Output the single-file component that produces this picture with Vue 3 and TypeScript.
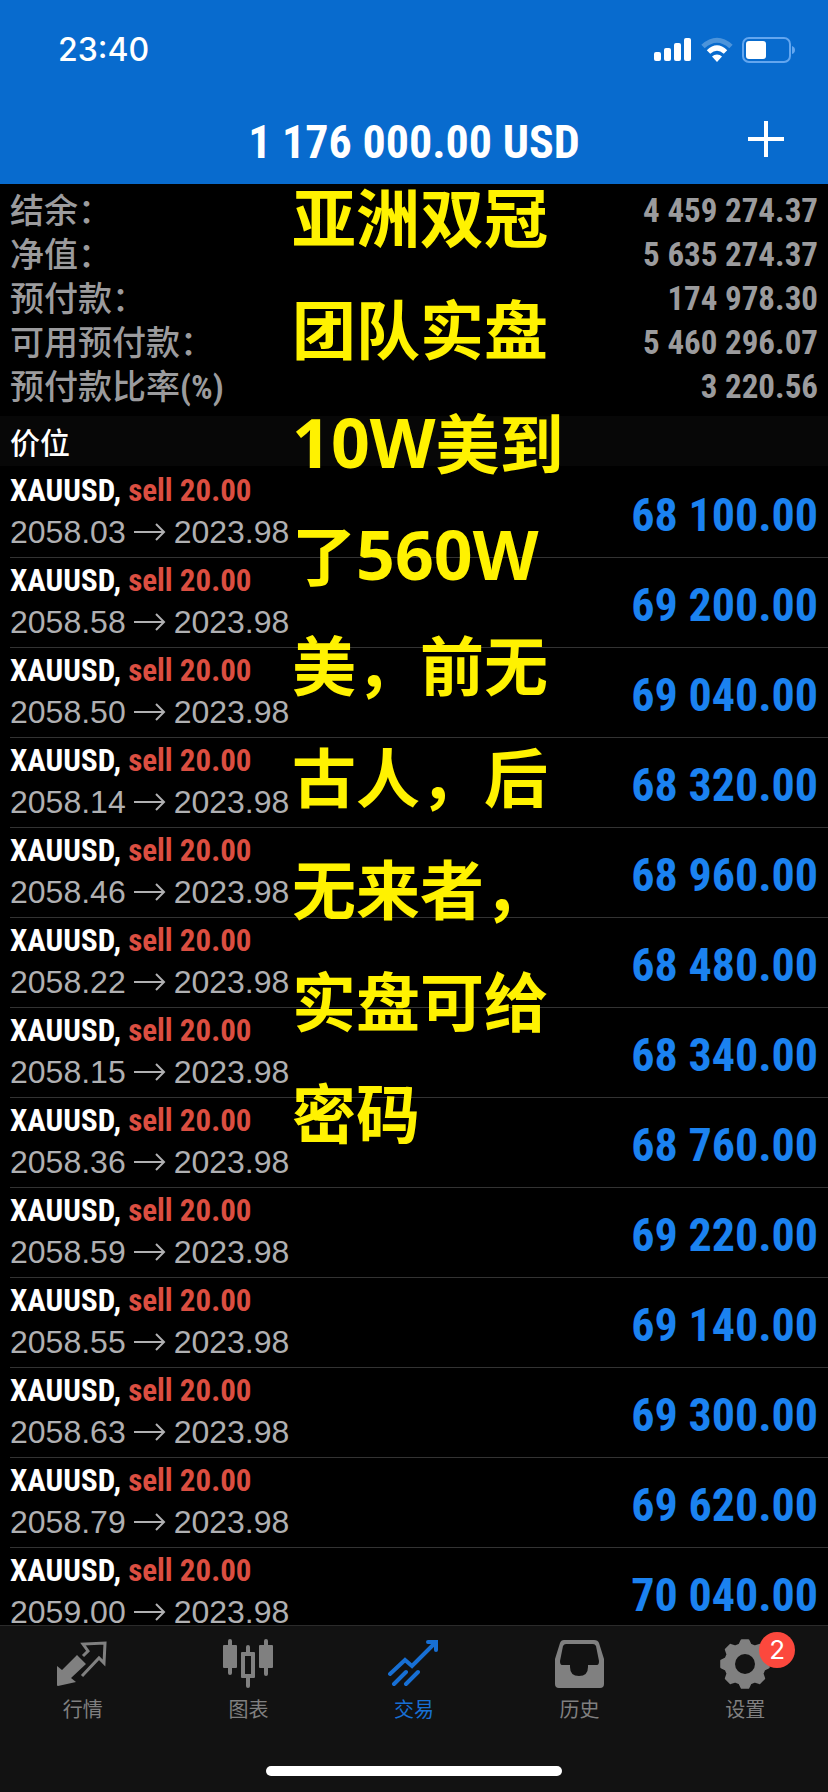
<script setup lang="ts">
import { ref } from 'vue'

interface SummaryLine {
  label: string
  unit?: string
  value: string
}

interface Position {
  open: string
  current: string
  profit: string
}

interface CaptionLine {
  before?: string
  latin?: string
  after?: string
}

type TabId = 'quotes' | 'chart' | 'trade' | 'history' | 'settings'

interface Tab {
  id: TabId
  label: string
  badge?: number
}

const summary: SummaryLine[] = [
  { label: '结余：', value: '4 459 274.37' },
  { label: '净值：', value: '5 635 274.37' },
  { label: '预付款：', value: '174 978.30' },
  { label: '可用预付款：', value: '5 460 296.07' },
  { label: '预付款比率', unit: '(%)', value: '3 220.56' },
]

const positions: Position[] = [
  { open: '2058.03', current: '2023.98', profit: '68 100.00' },
  { open: '2058.58', current: '2023.98', profit: '69 200.00' },
  { open: '2058.50', current: '2023.98', profit: '69 040.00' },
  { open: '2058.14', current: '2023.98', profit: '68 320.00' },
  { open: '2058.46', current: '2023.98', profit: '68 960.00' },
  { open: '2058.22', current: '2023.98', profit: '68 480.00' },
  { open: '2058.15', current: '2023.98', profit: '68 340.00' },
  { open: '2058.36', current: '2023.98', profit: '68 760.00' },
  { open: '2058.59', current: '2023.98', profit: '69 220.00' },
  { open: '2058.55', current: '2023.98', profit: '69 140.00' },
  { open: '2058.63', current: '2023.98', profit: '69 300.00' },
  { open: '2058.79', current: '2023.98', profit: '69 620.00' },
  { open: '2059.00', current: '2023.98', profit: '70 040.00' },
]

const captionLines: CaptionLine[] = [
  { before: '亚洲双冠' },
  { before: '团队实盘' },
  { latin: '10W', after: '美到' },
  { before: '了', latin: '560W' },
  { before: '美，前无' },
  { before: '古人，后' },
  { before: '无来者，' },
  { before: '实盘可给' },
  { before: '密码' },
]

const tabs: Tab[] = [
  { id: 'quotes', label: '行情' },
  { id: 'chart', label: '图表' },
  { id: 'trade', label: '交易' },
  { id: 'history', label: '历史' },
  { id: 'settings', label: '设置', badge: 2 },
]

const activeTab = ref<TabId>('trade')

// Eight-toothed cog centred at (26, 26).
function cogPath(): string {
  const corners: string[] = []
  for (let tooth = 0; tooth < 8; tooth++) {
    const mid = tooth * 45
    const profile: [number, number][] = [
      [-16, 20],
      [-8, 24],
      [8, 24],
      [16, 20],
    ]
    for (const [offset, radius] of profile) {
      const angle = ((mid + offset) * Math.PI) / 180
      corners.push(`${(26 + radius * Math.cos(angle)).toFixed(2)} ${(26 + radius * Math.sin(angle)).toFixed(2)}`)
    }
  }
  return `M${corners.join('L')}Z`
}

const cog = cogPath()
</script>

<template>
  <div class="app">
    <header class="header">
      <div class="status">
        <time class="clock">23:40</time>
        <div class="indicators">
          <svg width="38" height="26" viewBox="0 0 38 26" fill="#fff" aria-hidden="true">
            <rect x="0" y="15" width="7" height="9" rx="2" />
            <rect x="10" y="11" width="7" height="13" rx="2" />
            <rect x="20" y="6" width="7" height="18" rx="2" />
            <rect x="30" y="1" width="7" height="23" rx="2" />
          </svg>
          <svg width="32" height="26" viewBox="0 0 32 26" fill="none" stroke="#fff" aria-hidden="true">
            <path d="M2 9.5Q16-3 30 9.5" stroke-width="5" opacity="0.28" />
            <path d="M7.5 15Q16 7 24.500 15" stroke-width="5" />
            <path d="M16 17.500Q19 17.500 21 19.500L16 25L11 19.500Q13 17.500 16 17.500Z" fill="#fff" stroke="none" />
          </svg>
          <svg width="54" height="26" viewBox="0 0 54 26" aria-hidden="true">
            <rect x="1" y="1" width="47" height="24" rx="6" fill="none" stroke="#63a6ef" stroke-width="2" />
            <rect x="4" y="4" width="20" height="18" rx="3" fill="#fff" />
            <path d="M50 9Q53 10 53 13Q53 16 50 17Z" fill="#63a6ef" />
          </svg>
        </div>
      </div>
      <div class="titlebar">
        <h1 class="title">1 176 000.00 USD</h1>
        <button class="add" type="button" aria-label="新订单">
          <svg width="36" height="36" viewBox="0 0 36 36" aria-hidden="true">
            <path d="M18 0V36M0 18H36" stroke="#fff" stroke-width="4" />
          </svg>
        </button>
      </div>
    </header>

    <main class="content">
      <dl class="summary">
        <div v-for="line in summary" :key="line.label" class="summary-line">
          <dt>{{ line.label }}<span v-if="line.unit" class="unit">{{ line.unit }}</span></dt>
          <dd>{{ line.value }}</dd>
        </div>
      </dl>

      <h2 class="section">价位</h2>

      <ul class="positions">
        <li v-for="(p, i) in positions" :key="i" class="position">
          <div class="details">
            <div class="symbol">XAUUSD, <span class="side">sell 20.00</span></div>
            <div class="prices">
              <span>{{ p.open }}</span>
              <svg width="32" height="18" viewBox="0 0 32 18" role="img" aria-label="→">
                <path d="M0 9H30M22 1L30 9L22 17" fill="none" stroke="currentColor" stroke-width="2" />
              </svg>
              <span>{{ p.current }}</span>
            </div>
          </div>
          <div class="profit">{{ p.profit }}</div>
        </li>
      </ul>
    </main>

    <div class="caption">
      <div v-for="(line, i) in captionLines" :key="i" class="caption-line">
        {{ line.before }}<span v-if="line.latin" class="latin">{{ line.latin }}</span>{{ line.after }}
      </div>
    </div>

    <footer class="footer">
      <nav class="tabs">
        <button
          v-for="tab in tabs"
          :key="tab.id"
          type="button"
          class="tab"
          :class="{ active: tab.id === activeTab }"
          @click="activeTab = tab.id"
        >
          <span class="icon">
            <svg width="52" height="52" viewBox="0 0 52 52" aria-hidden="true">
              <g v-if="tab.id === 'quotes'">
                <path d="M0 28L5 32L20 17L29 26L14 40L19 44L1 48Q0 48 0 47Z" fill="currentColor" />
                <path d="M26 18L31 13L26 6L48 5L47 25L42 20L25 38" fill="none" stroke="currentColor" stroke-width="3" />
              </g>
              <g v-else-if="tab.id === 'chart'" fill="currentColor">
                <rect x="1" y="7" width="14" height="23" rx="1" />
                <rect x="6" y="1" width="4" height="36" rx="2" />
                <path d="M19 15Q19 14 20 14H24V9Q24 7 26 7Q28 7 28 9V14H32Q33 14 33 15V39Q33 40 32 40H28V48Q28 50 26 50Q24 50 24 48V40H20Q19 40 19 39ZM23 18V36H29V18Z" fill-rule="evenodd" />
                <rect x="37" y="7" width="14" height="23" rx="1" />
                <rect x="42" y="1" width="4" height="37" rx="2" />
              </g>
              <g v-else-if="tab.id === 'trade'" fill="none" stroke="currentColor" stroke-width="4" stroke-linecap="round">
                <path d="M2 36L17 22L24 28L48 4M40 4H48V12M18 34L6 46M30 34L18 46" />
              </g>
              <path
                v-else-if="tab.id === 'history'"
                d="M10 2H40Q44 2 45 5L50 21V46Q50 50 46 50H5Q1 50 1 46V21L6 5Q7 2 10 2ZM12 6Q10 6 9 8L6 23Q6 27 8 27H16V29Q16 38 25 38Q34 38 34 29V27H43Q45 27 45 23L42 8Q41 6 39 6Z"
                fill="currentColor"
                fill-rule="evenodd"
              />
              <g v-else>
                <path :d="cog" fill="currentColor" stroke="currentColor" stroke-width="2" stroke-linejoin="round" />
                <circle cx="26" cy="26" r="10" fill="#121212" />
              </g>
            </svg>
            <span v-if="tab.badge" class="badge">{{ tab.badge }}</span>
          </span>
          <span class="tab-label">{{ tab.label }}</span>
        </button>
      </nav>
      <div class="home"></div>
    </footer>
  </div>
</template>

<style>
body {
  background: #000;
}
</style>

<style scoped>
.app {
  --narrow: 'Roboto Condensed', Roboto, 'Noto Sans CJK SC', sans-serif;
  position: relative;
  display: flex;
  flex-direction: column;
  height: 100vh;
  overflow: hidden;
  background: #000;
  font-family: 'Liberation Sans', 'Noto Sans CJK SC', sans-serif;
}

.header {
  flex: none;
  background: #086bce;
  color: #fff;
}

.status {
  display: flex;
  align-items: center;
  justify-content: space-between;
  height: 100px;
  padding: 0 32px 0 58px;
}

.clock {
  font: 500 32px/40px Inter, 'Liberation Sans', sans-serif;
}

.indicators {
  display: flex;
  align-items: center;
  gap: 9px;
}

.titlebar {
  display: grid;
  grid-template-columns: 1fr auto 1fr;
  align-items: center;
  height: 84px;
  padding: 0 44px;
}

.title {
  grid-column: 2;
  margin: 0;
  font: bold 46px/84px var(--narrow);
  white-space: nowrap;
}

.add {
  justify-self: end;
  display: flex;
  padding: 0 0 6px;
  border: 0;
  background: none;
}

.content {
  flex: 1;
  min-height: 0;
  overflow: hidden;
}

.summary {
  margin: 0;
  padding: 4px 10px 8px;
  color: #9b9b9d;
}

.summary-line {
  display: flex;
  justify-content: space-between;
  height: 44px;
  line-height: 44px;
}

.summary-line dt {
  font-family: 'Noto Sans CJK SC', sans-serif;
  font-size: 34px;
  font-weight: 500;
  line-height: 42px;
}

.unit {
  font-family: var(--narrow);
  font-weight: bold;
}

.summary-line dd {
  margin: 0;
  font-family: var(--narrow);
  font-size: 33px;
  font-weight: bold;
  line-height: 46px;
}

.section {
  margin: 0;
  padding: 0 10px;
  background: #070707;
  color: #fff;
  font: 500 30px/50px 'Noto Sans CJK SC', sans-serif;
}

.positions {
  margin: 0;
  padding: 2px 0 0 10px;
  list-style: none;
}

.position {
  box-sizing: border-box;
  display: flex;
  align-items: center;
  justify-content: space-between;
  height: 90px;
  padding-right: 10px;
  border-bottom: 1px solid #333;
}

.details {
  padding-bottom: 2px;
}

.symbol {
  color: #fff;
  font: bold 31px/40px var(--narrow);
}

.side {
  color: #db4e41;
}

.prices {
  display: flex;
  align-items: center;
  gap: 8px;
  color: #b0b0b2;
  font-size: 32px;
  line-height: 42px;
}

.profit {
  padding-top: 4px;
  color: #1b82f0;
  font: bold 46px/60px var(--narrow);
}

.caption {
  position: absolute;
  top: 162px;
  left: 292px;
  color: #fff200;
  font: bold 64px/112px 'Open Sans', 'Noto Sans CJK SC', sans-serif;
  white-space: nowrap;
  pointer-events: none;
}

.caption-line {
  height: 112px;
}

.latin {
  font-size: 68px;
}

.footer {
  flex: none;
  padding-bottom: 16px;
  border-top: 1px solid #2b2b2b;
  background: #121212;
}

.tabs {
  display: grid;
  grid-template-columns: repeat(5, 1fr);
  height: 140px;
}

.tab {
  display: flex;
  flex-direction: column;
  align-items: center;
  gap: 6px;
  padding: 12px 0 0;
  border: 0;
  background: none;
  color: #808080;
}

.tab.active {
  color: #176fd4;
}

.icon {
  position: relative;
  display: flex;
}

.badge {
  position: absolute;
  top: -6px;
  right: -24px;
  width: 36px;
  border-radius: 18px;
  background: #fc483d;
  color: #fff;
  font: 26px/36px Inter, 'Liberation Sans', sans-serif;
  text-align: center;
}

.tab-label {
  font: 20px/26px 'Noto Sans CJK SC', sans-serif;
}

.home {
  width: 296px;
  height: 10px;
  margin: 0 auto;
  border-radius: 5px;
  background: #fff;
}
</style>
